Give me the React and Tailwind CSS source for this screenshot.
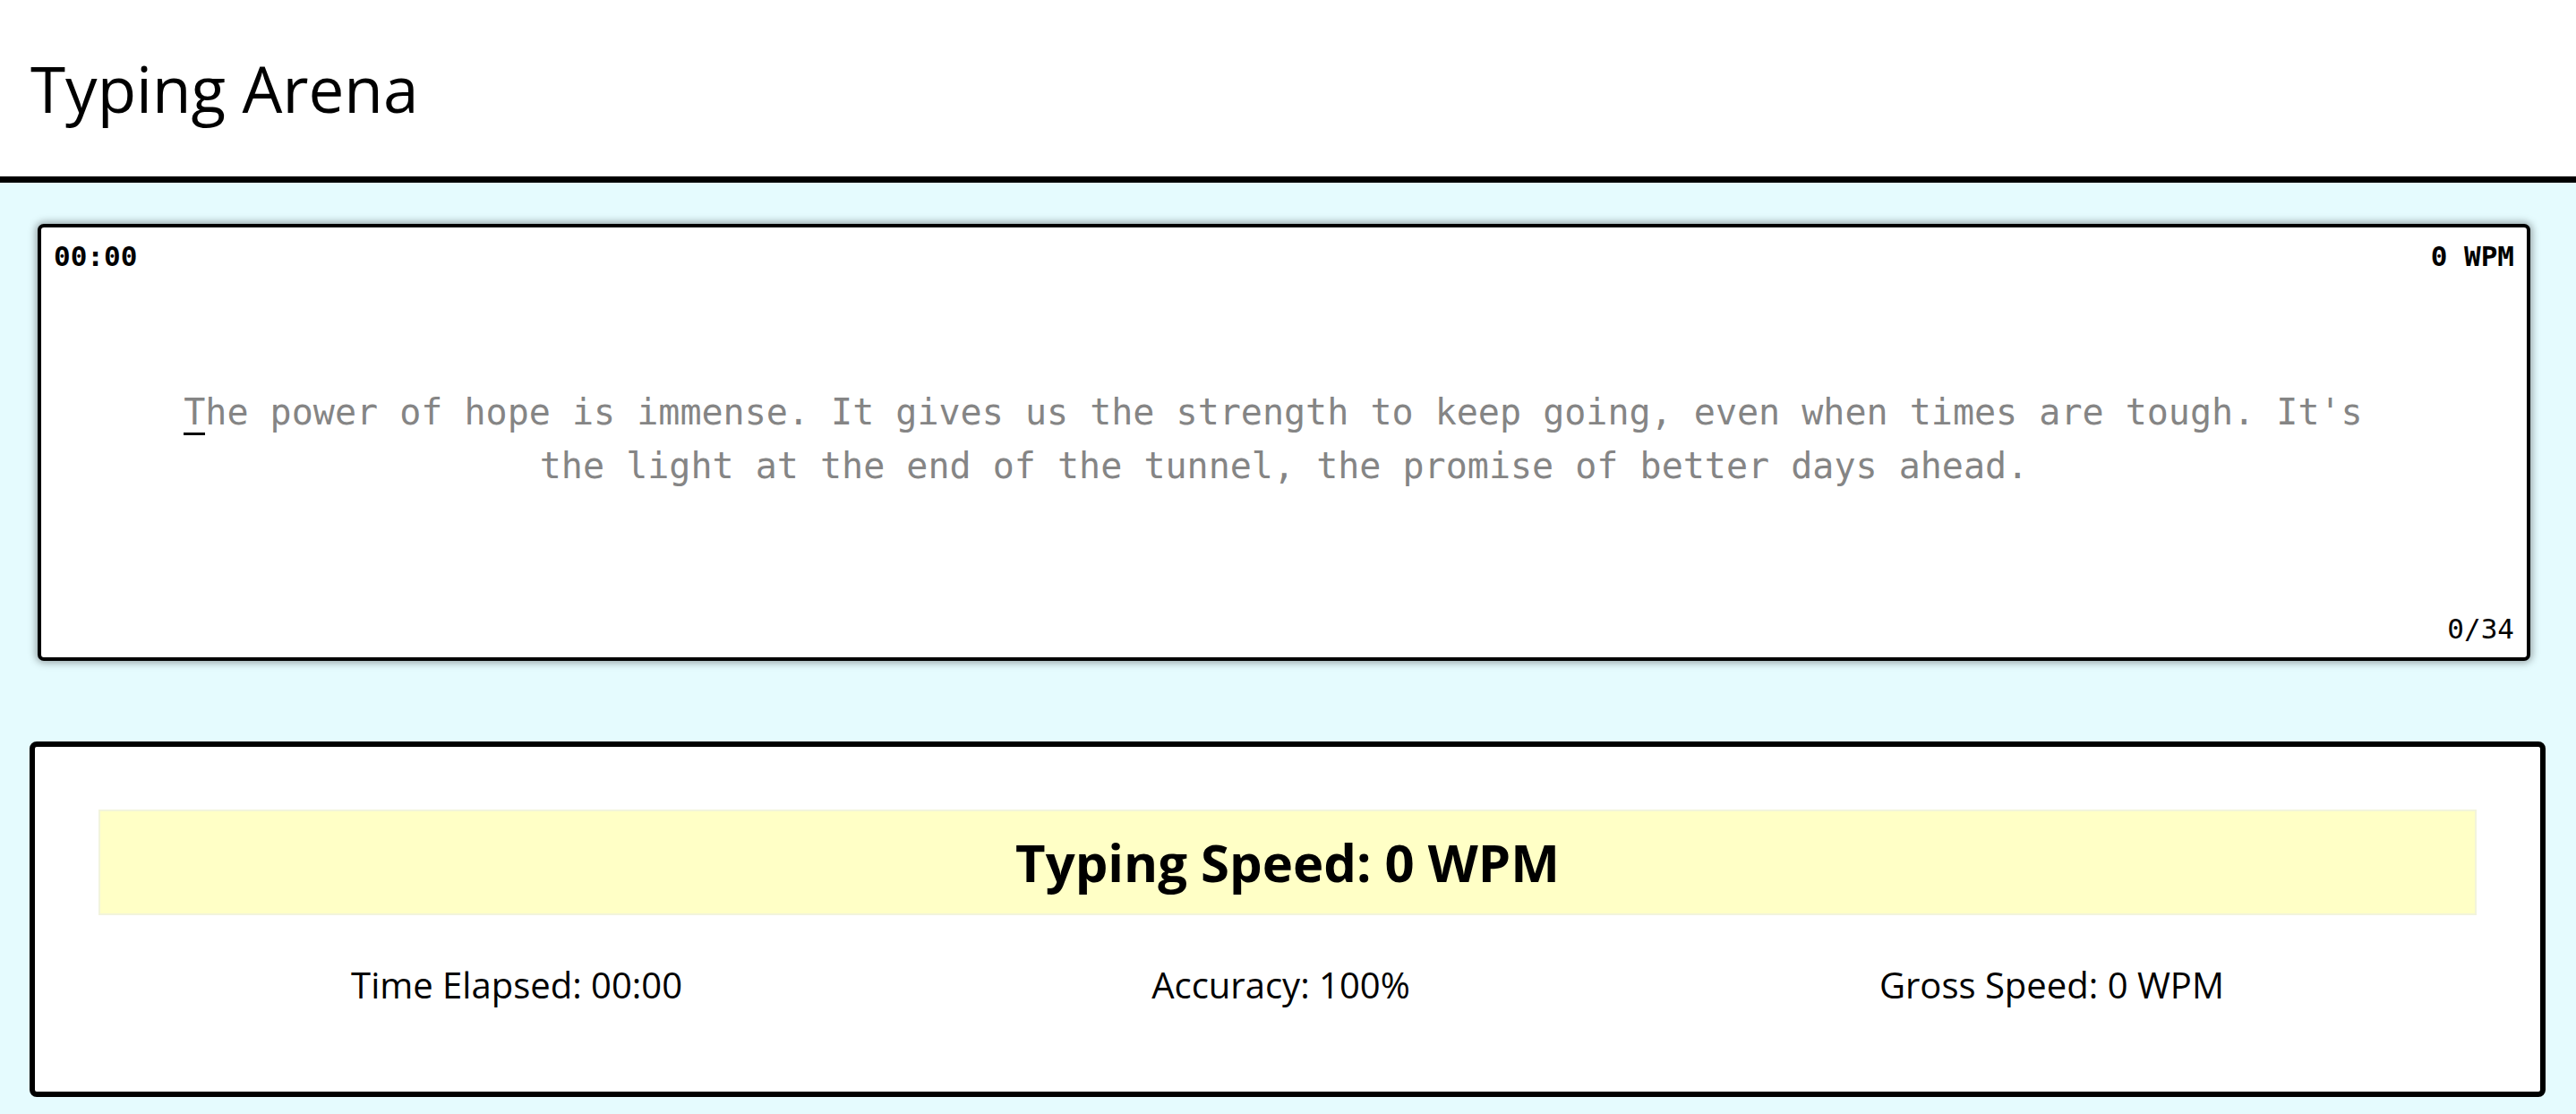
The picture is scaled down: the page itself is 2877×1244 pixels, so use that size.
import { useState } from 'react';

const PASSAGE =
  "The power of hope is immense. It gives us the strength to keep going, even when times are tough. It's the light at the end of the tunnel, the promise of better days ahead.";

export default function App() {
  const [typed] = useState('');
  const words = PASSAGE.split(' ');

  return (
    <div className="min-h-screen bg-[#e5fbfe] font-['Comic_Sans_MS','Open_Sans',sans-serif] text-black">
      {/* Header */}
      <header className="h-[204px] bg-white border-b-[7px] border-black flex items-center px-[34px]">
        <h1 className="text-[71px] leading-none">Typing Arena</h1>
      </header>

      {/* Typing area */}
      <div className="ml-[42px] mr-[51px] mt-[46px] h-[488px] bg-white border-[4px] border-black rounded-[7px] shadow-[0_0_8px_2px_rgba(0,0,0,0.35)] flex flex-col px-[14px] py-[12px] font-['Consolas','DejaVu_Sans_Mono',monospace]">
        <div className="flex justify-between text-[31px] font-bold leading-[1.3]">
          <span>00:00</span>
          <span>0 WPM</span>
        </div>

        <div className="flex-1 flex items-center justify-center pb-[8px]">
          <p className="text-center text-[40px] leading-[1.5] text-[#858585] max-w-[2500px]">
            {words.map((word, wi) => (
              <span key={wi} className="inline-block">
                {word.split('').map((ch, ci) => (
                  <span
                    key={ci}
                    className={
                      wi === 0 && ci === typed.length
                        ? 'border-b-[3px] border-black'
                        : ''
                    }
                  >
                    {ch}
                  </span>
                ))}
                {wi < words.length - 1 ? '\u00a0' : ''}
              </span>
            ))}
          </p>
        </div>

        <div className="flex justify-end text-[31px] leading-[1.3]">
          <span>0/{words.length}</span>
        </div>
      </div>

      {/* Results */}
      <div className="ml-[33px] mr-[34px] mt-[90px] bg-white border-[6px] border-black rounded-[8px] px-[71px] pt-[70px] pb-[91px]">
        <div className="h-[118px] bg-[#ffffc6] border-2 border-[#f2f4dc] flex items-center justify-center">
          <h2 className="text-[58px] font-bold leading-none">Typing Speed: 0 WPM</h2>
        </div>
        <div className="mt-[50px] flex justify-around px-[20px] text-[40px] leading-[1.4]">
          <span>Time Elapsed: 00:00</span>
          <span>Accuracy: 100%</span>
          <span>Gross Speed: 0 WPM</span>
        </div>
      </div>
    </div>
  );
}
